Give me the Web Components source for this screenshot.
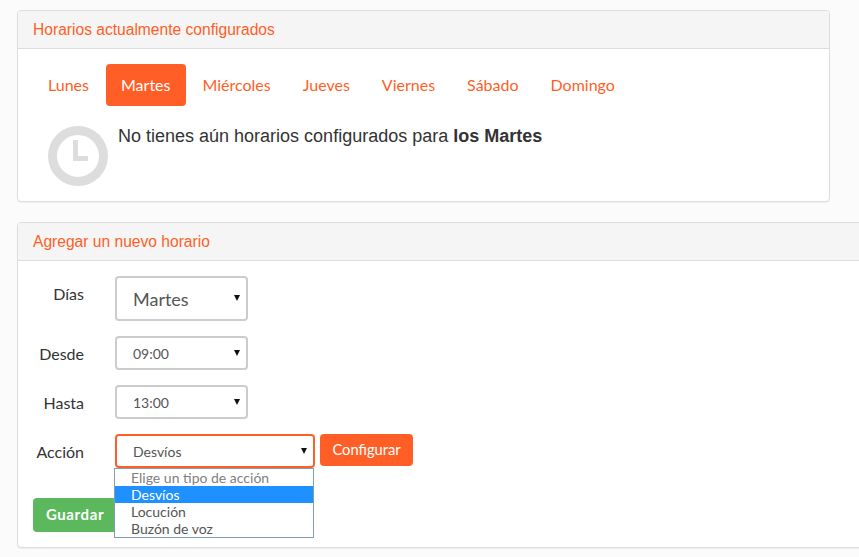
<!DOCTYPE html>
<html lang="es">
<head>
<meta charset="utf-8">
<title>Horarios</title>
<style>
    html, body { margin: 0; height: 100%; overflow: hidden; }
    body {
        background: #fbfbfb;
        color: #333;
        font-family: Lato, sans-serif;
        padding: 10px 0 0 17px;
        box-sizing: border-box;
    }
</style>
</head>
<body>
<x-schedule-app></x-schedule-app>

<script>
const ORANGE = '#ff5f27';

class XPanel extends HTMLElement {
    constructor() {
        super();
        this.attachShadow({ mode: 'open' });
    }

    connectedCallback() {
        this.shadowRoot.innerHTML = `
            <style>
                :host {
                    display: block;
                    box-sizing: border-box;
                    background: #fff;
                    border: 1px solid #ddd;
                    border-radius: 4px;
                    box-shadow: 0 1px 1px rgba(0,0,0,.05);
                }
                .heading {
                    height: 37px;
                    padding: 0 15px;
                    display: flex;
                    align-items: center;
                    background: #f5f5f5;
                    border-bottom: 1px solid #ddd;
                    border-radius: 3px 3px 0 0;
                    color: ${ORANGE};
                    font: 15.6px "Liberation Sans", Arial, sans-serif;
                }
            </style>
            <div class="heading">${this.getAttribute('heading')}</div>
            <slot></slot>
        `;
    }
}

class XDayTabs extends HTMLElement {
    constructor() {
        super();
        this.attachShadow({ mode: 'open' });
    }

    connectedCallback() {
        const active = this.getAttribute('active');
        const days = this.getAttribute('days').split(',');
        this.shadowRoot.innerHTML = `
            <style>
                :host { display: flex; gap: 2px; }
                a {
                    box-sizing: border-box;
                    padding: 0 15px 2px;
                    height: 42px;
                    display: flex;
                    align-items: center;
                    border-radius: 4px;
                    color: ${ORANGE};
                    font: 16px Lato, sans-serif;
                }
                a.active { background: ${ORANGE}; color: #fff; padding-right: 16px; margin-right: -1px; }
            </style>
            ${days.map(d => `<a class="${d === active ? 'active' : ''}">${d}</a>`).join('')}
        `;
    }
}

class XClockIcon extends HTMLElement {
    constructor() {
        super();
        this.attachShadow({ mode: 'open' });
        this.shadowRoot.innerHTML = `
            <style>:host { display: block; width: 60px; height: 60px; }</style>
            <svg width="60" height="60" viewBox="0 0 60 60" fill="none" stroke="#ddd">
                <circle cx="30" cy="30" r="25.5" stroke-width="9"/>
                <path d="M27.5 14V32.5H40" stroke-width="5"/>
            </svg>
        `;
    }
}

class XSelectBox extends HTMLElement {
    constructor() {
        super();
        this.attachShadow({ mode: 'open' });
    }

    connectedCallback() {
        this.shadowRoot.innerHTML = `
            <style>
                :host {
                    display: flex;
                    align-items: center;
                    justify-content: space-between;
                    box-sizing: border-box;
                    width: var(--w, 133px);
                    height: var(--h, 34px);
                    padding: 0 6px 0 16px;
                    background: #fff;
                    border: 2px solid var(--line, #ccc);
                    border-radius: 4px;
                    color: #555;
                    font: var(--size, 14px) Lato, sans-serif;
                }
                svg { display: block; margin-top: -1px; }
            </style>
            <slot></slot>
            <svg width="6" height="6" viewBox="0 0 6 6"><path d="M0 0H6L3 6Z" fill="#111"/></svg>
        `;
    }
}

class XFormRow extends HTMLElement {
    constructor() {
        super();
        this.attachShadow({ mode: 'open' });
    }

    connectedCallback() {
        this.shadowRoot.innerHTML = `
            <style>
                :host {
                    display: grid;
                    grid-template-columns: 51px auto;
                    justify-content: start;
                    column-gap: 31px;
                }
                label {
                    text-align: right;
                    color: #333;
                    font: 16px/20px Lato, sans-serif;
                    padding-top: 8px;
                }
                .control { display: flex; gap: 5px; align-items: flex-start; position: relative; }
            </style>
            <label>${this.getAttribute('label')}</label>
            <div class="control"><slot></slot></div>
        `;
    }
}

class XButton extends HTMLElement {
    constructor() {
        super();
        this.attachShadow({ mode: 'open' });
    }

    connectedCallback() {
        this.shadowRoot.innerHTML = `
            <style>
                :host {
                    display: inline-flex;
                    align-items: center;
                    justify-content: center;
                    box-sizing: border-box;
                    width: var(--w);
                    height: var(--h);
                    padding-bottom: 2px;
                    border-radius: 4px;
                    background: var(--bg, ${ORANGE});
                    color: #fff;
                    font: var(--weight, 400) var(--size, 14.7px) Lato, sans-serif;
                    letter-spacing: var(--track, 0);
                }
            </style>
            <slot></slot>
        `;
    }
}

class XDropdownList extends HTMLElement {
    constructor() {
        super();
        this.attachShadow({ mode: 'open' });
    }

    connectedCallback() {
        const selected = this.getAttribute('selected');
        const [placeholder, ...options] = this.getAttribute('options').split(',');
        this.shadowRoot.innerHTML = `
            <style>
                :host {
                    position: absolute;
                    left: -1px;
                    top: 34px;
                    z-index: 2;
                    box-sizing: border-box;
                    width: 200px;
                    background: #fff;
                    border: 1px solid #7f9db9;
                    font: 14px/17px Lato, sans-serif;
                    color: #555;
                }
                div { height: 17px; padding-left: 16px; }
                .placeholder { color: #808080; }
                .selected { background: #1e90ff; color: #fff; }
            </style>
            <div class="placeholder">${placeholder}</div>
            ${options.map(o => `<div class="${o === selected ? 'selected' : ''}">${o}</div>`).join('')}
        `;
    }
}

class XScheduleApp extends HTMLElement {
    constructor() {
        super();
        this.attachShadow({ mode: 'open' });
        this.shadowRoot.innerHTML = `
            <style>
                :host { display: block; width: 900px; }
                .current { width: 813px; height: 192px; margin-bottom: 20px; }
                .current-body { padding: 15px 15px 0; }
                .empty { display: flex; gap: 10px; padding: 20px 0 0 15px; }
                .empty p {
                    margin: 0;
                    color: #333;
                    font: 18px/20px "Liberation Sans", Arial, sans-serif;
                }
                .add { height: 326px; }
                .add-body { padding: 15px; display: flex; flex-direction: column; gap: 15px; }
                .big { --h: 45px; --size: 18px; }
                .wide { --w: 200px; --line: ${ORANGE}; }
                .cfg { --w: 93px; --h: 32px; }
                .save { --w: 84px; --h: 34px; --bg: #5cb85c; --weight: 700; --size: 15px; --track: .6px; margin-top: 15px; }
            </style>
            <x-panel class="current" heading="Horarios actualmente configurados">
                <div class="current-body">
                    <x-day-tabs active="Martes" days="Lunes,Martes,Miércoles,Jueves,Viernes,Sábado,Domingo"></x-day-tabs>
                    <div class="empty">
                        <x-clock-icon></x-clock-icon>
                        <p>No tienes aún horarios configurados para <b>los Martes</b></p>
                    </div>
                </div>
            </x-panel>
            <x-panel class="add" heading="Agregar un nuevo horario">
                <div class="add-body">
                    <x-form-row label="Días"><x-select-box class="big">Martes</x-select-box></x-form-row>
                    <x-form-row label="Desde"><x-select-box>09:00</x-select-box></x-form-row>
                    <x-form-row label="Hasta"><x-select-box>13:00</x-select-box></x-form-row>
                    <x-form-row label="Acción">
                        <x-select-box class="wide">Desvíos</x-select-box>
                        <x-button class="cfg">Configurar</x-button>
                        <x-dropdown-list selected="Desvíos" options="Elige un tipo de acción,Desvíos,Locución,Buzón de voz"></x-dropdown-list>
                    </x-form-row>
                    <div><x-button class="save">Guardar</x-button></div>
                </div>
            </x-panel>
        `;
    }
}

customElements.define('x-panel', XPanel);
customElements.define('x-day-tabs', XDayTabs);
customElements.define('x-clock-icon', XClockIcon);
customElements.define('x-select-box', XSelectBox);
customElements.define('x-form-row', XFormRow);
customElements.define('x-button', XButton);
customElements.define('x-dropdown-list', XDropdownList);
customElements.define('x-schedule-app', XScheduleApp);
</script>
</body>
</html>
